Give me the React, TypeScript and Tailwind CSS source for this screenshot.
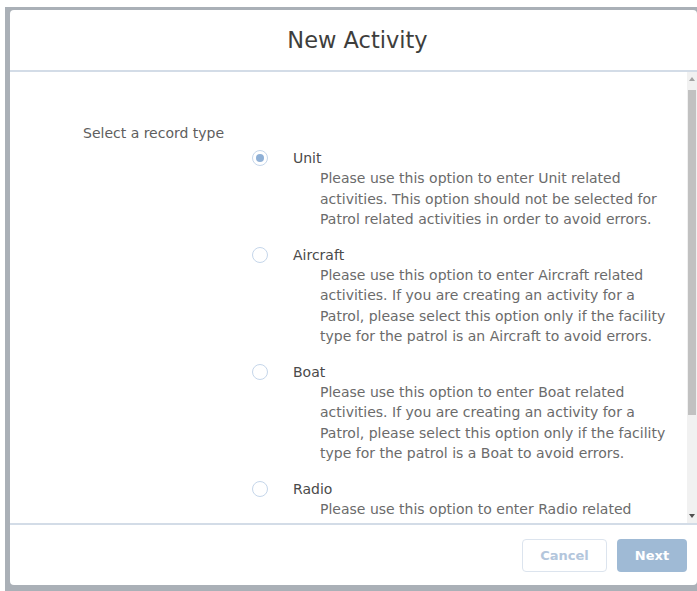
import { useState } from 'react'

const recordTypes = [
  {
    name: 'Unit',
    lines: [
      'Please use this option to enter Unit related',
      'activities. This option should not be selected for',
      'Patrol related activities in order to avoid errors.',
    ],
  },
  {
    name: 'Aircraft',
    lines: [
      'Please use this option to enter Aircraft related',
      'activities. If you are creating an activity for a',
      'Patrol, please select this option only if the facility',
      'type for the patrol is an Aircraft to avoid errors.',
    ],
  },
  {
    name: 'Boat',
    lines: [
      'Please use this option to enter Boat related',
      'activities. If you are creating an activity for a',
      'Patrol, please select this option only if the facility',
      'type for the patrol is a Boat to avoid errors.',
    ],
  },
  {
    name: 'Radio',
    // the rest of this description sits below the fold of the scroll area
    lines: ['Please use this option to enter Radio related'],
  },
]

export default function App() {
  const [selected, setSelected] = useState('Unit')

  return (
    <div
      className="w-[697px] h-[591px] bg-white overflow-hidden"
      style={{ fontFamily: '"DejaVu Sans", sans-serif' }}
    >
      {/* Backdrop */}
      <div className="ml-[5px] mt-[7px] h-[584px] bg-[#aab0b7] pl-[5px] pt-[3px] pb-[6px]">
        {/* Modal */}
        <div className="h-full bg-white rounded-[4px] flex flex-col overflow-hidden">
          {/* Header */}
          <div className="h-[62px] shrink-0 flex items-center justify-center pl-[8px] border-b-2 border-[#d3dce7]">
            <h2 className="text-[22.5px] text-[#3e3e3c] mt-[1px]">New Activity</h2>
          </div>

          {/* Body */}
          <div className="flex-1 flex min-h-0">
            <div className="flex-1 overflow-hidden pl-[73px] pt-[51px]">
              <p className="text-[14px] leading-[20px] text-[#5e5e5e]">Select a record type</p>
              <div className="pl-[169px] mt-[5px] flex flex-col gap-[15px]">
                {recordTypes.map((rt) => (
                  <div key={rt.name}>
                    <label
                      className="flex items-center cursor-pointer"
                      onClick={() => setSelected(rt.name)}
                    >
                      <span className="w-[16px] h-[16px] rounded-full border border-[#c5d6ea] flex items-center justify-center">
                        {selected === rt.name && (
                          <span className="w-[8px] h-[8px] rounded-full bg-[#8fb0d6]" />
                        )}
                      </span>
                      <span className="ml-[25px] text-[14px] leading-[20px] text-[#4a4a4a]">
                        {rt.name}
                      </span>
                    </label>
                    <div className="pl-[68px] text-[14px] leading-[20.5px] text-[#6b6b6b]">
                      {rt.lines.map((line) => (
                        <div key={line} className="whitespace-nowrap">{line}</div>
                      ))}
                    </div>
                  </div>
                ))}
              </div>
            </div>

            {/* Scrollbar */}
            <div className="w-[10px] bg-[#f1f1f1] flex flex-col items-center">
              <div className="h-[14px] flex items-center justify-center">
                <span className="w-0 h-0 border-x-[3px] border-x-transparent border-b-[4px] border-b-[#a3a3a3]" />
              </div>
              <div className="w-[8px] h-[325px] mt-[4px] bg-[#c1c1c1]" />
              <div className="flex-1" />
              <div className="h-[14px] flex items-center justify-center">
                <span className="w-0 h-0 border-x-[3px] border-x-transparent border-t-[4px] border-t-[#505050]" />
              </div>
            </div>
          </div>

          {/* Footer */}
          <div className="h-[62px] shrink-0 border-t-2 border-[#d3dce7] flex items-start justify-end gap-[10px] pt-[14px] pr-[10px]">
            <button className="w-[85px] h-[33px] rounded-[4px] border border-[#dce4ee] bg-white text-[13px] font-semibold text-[#b3c6dc]">
              Cancel
            </button>
            <button className="w-[70px] h-[33px] rounded-[4px] bg-[#9fbad5] text-[13px] font-bold text-white">
              Next
            </button>
          </div>
        </div>
      </div>
    </div>
  )
}
